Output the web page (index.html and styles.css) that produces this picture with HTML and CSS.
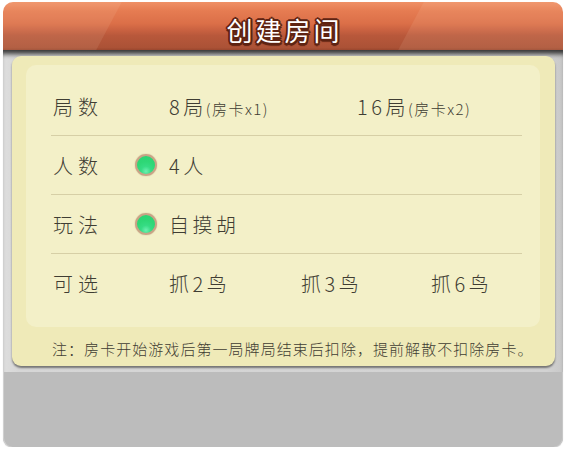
FILE: index.html
```html
<!DOCTYPE html>
<html lang="zh-CN">
<head>
<meta charset="utf-8">
<title>创建房间</title>
<link rel="stylesheet" href="styles.css">
</head>
<body>
<div class="window">
  <div class="header">
    <h1 class="title">创建房间</h1>
  </div>
  <div class="frame">
    <div class="upper">
      <div class="card">
        <div class="panel">
          <div class="row">
            <span class="label">局数</span>
            <span class="mark"></span>
            <span class="opt opt-wide">8局<small>(房卡x1)</small></span>
            <span class="opt">16局<small>(房卡x2)</small></span>
          </div>
          <div class="row">
            <span class="label">人数</span>
            <span class="mark"><i class="radio"></i></span>
            <span class="opt">4人</span>
          </div>
          <div class="row">
            <span class="label">玩法</span>
            <span class="mark"><i class="radio"></i></span>
            <span class="opt">自摸胡</span>
          </div>
          <div class="row last">
            <span class="label">可选</span>
            <span class="mark"></span>
            <span class="opt opt-c1">抓2鸟</span>
            <span class="opt opt-c2">抓3鸟</span>
            <span class="opt">抓6鸟</span>
          </div>
        </div>
        <p class="note">注：房卡开始游戏后第一局牌局结束后扣除，提前解散不扣除房卡。</p>
      </div>
    </div>
  </div>
</div>
</body>
</html>
```
FILE: styles.css
```css
* { box-sizing: border-box; }
html, body { margin: 0; padding: 0; background: #ffffff; }
body {
  font-family: "Noto Sans CJK SC", "Noto Sans", sans-serif;
  font-weight: 300;
  color: #3f3d33;
}
.window {
  width: 560px;
  margin: 2px 0 0 3px;
}
.header {
  position: relative;
  overflow: hidden;
  height: 48px;
  padding-top: 8px;
  border-radius: 10px 10px 0 0;
  display: flex;
  justify-content: center;
  align-items: center;
  background: linear-gradient(to bottom,
    #ef9066 0%, #e67c52 18%, #db6f48 45%, #ca6241 58%, #b8583b 70%, #ab5236 95%, #9a472e 100%);
}
.header::before,
.header::after {
  content: "";
  position: absolute;
  top: 0;
  height: 100%;
  background: rgba(255, 225, 195, 0.1);
  transform: skewX(-28deg);
}
.header::before { left: -40px; width: 146px; }
.header::after { left: 408px; width: 200px; }
.title {
  position: relative;
  z-index: 1;
  margin: 0;
  font-size: 26px;
  line-height: 40px;
  font-weight: 400;
  letter-spacing: 3px;
  padding-left: 3px;
  color: #ffffff;
  text-shadow:
    -1.5px -1.5px 0 #5e2312, 1.5px -1.5px 0 #5e2312,
    -1.5px 1.5px 0 #5e2312, 1.5px 1.5px 0 #5e2312,
    0 -2px 0 #5e2312, 0 2px 0 #5e2312, -2px 0 0 #5e2312, 2px 0 0 #5e2312,
    0 3px 1px #5e2312;
}
.frame {
  height: 397px;
  background: #bcbcbc;
  border-radius: 0 0 9px 9px;
  box-shadow: inset 1px 0 0 #d0d0d0, inset -1px 0 0 #c8c8c8, 0 1px 1px #d8d8d8;
}
.upper {
  padding: 6px 8px 6px 9px;
  background: linear-gradient(to right, #dedede, #d6d6d6 3%, #d2d2d2 97%, #c8c8c8);
  box-shadow: inset 0 7px 5px -3px rgba(0, 0, 0, 0.75);
}
.card {
  height: 310px;
  padding: 9px 15px 0 14px;
  background: #efeab8;
  border-radius: 9px;
  box-shadow: 0 2px 2px rgba(0, 0, 0, 0.45);
}
.panel {
  height: 262px;
  padding: 12px 18px 14px 25px;
  background: #f3f0c8;
  border-radius: 10px;
}
.row {
  height: 59px;
  display: flex;
  align-items: center;
  padding-left: 2px;
  border-bottom: 1px solid #d6cfa6;
}
.row.last { border-bottom: none; }
.label {
  width: 82px;
  font-size: 20px;
  letter-spacing: 5px;
}
.mark {
  width: 34px;
  display: flex;
  align-items: center;
}
.radio {
  display: block;
  width: 22px;
  height: 22px;
  border-radius: 50%;
  border: 2px solid #c9a386;
  background: radial-gradient(circle at 50% 85%, #6cf0b0 0, #36dc84 28%, #2ed776 55%, #2ad472 100%);
  box-shadow: 0 0 1px rgba(120, 80, 40, 0.5);
}
.opt {
  font-size: 20px;
  letter-spacing: 3.5px;
  white-space: nowrap;
}
.opt small {
  font-size: 15px;
  letter-spacing: 1.5px;
  margin-left: -1px;
}
.opt-wide { width: 188px; }
.opt-c1 { width: 132px; }
.opt-c2 { width: 130px; }
.note {
  margin: 11px 0 0 26px;
  font-size: 15px;
  line-height: 22px;
  letter-spacing: 1.05px;
  white-space: nowrap;
}
```
